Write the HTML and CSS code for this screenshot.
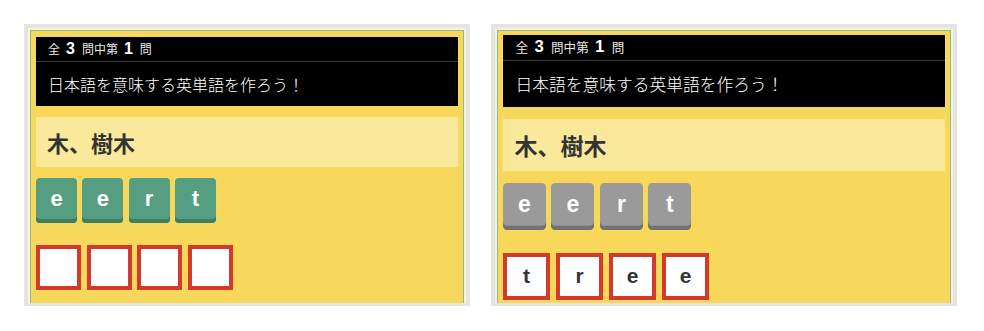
FILE: index.html
```html
<!DOCTYPE html>
<html lang="ja">
<head>
<meta charset="utf-8">
<title>英単語クイズ</title>
<link rel="stylesheet" href="styles.css">
</head>
<body>
<div class="page">
  <section class="frame frame-a">
    <div class="inner inner-a">
      <div class="content">
        <div class="qbox">
          <div class="qhead">全<b>3</b>問中第<b>1</b>問</div>
          <div class="qtext">日本語を意味する英単語を作ろう！</div>
        </div>
        <div class="word">木、樹木</div>
        <div class="tiles">
          <div class="tile">e</div>
          <div class="tile">e</div>
          <div class="tile">r</div>
          <div class="tile">t</div>
        </div>
        <div class="slots">
          <div class="slot"></div>
          <div class="slot"></div>
          <div class="slot"></div>
          <div class="slot"></div>
        </div>
      </div>
    </div>
  </section>
  <section class="frame frame-b">
    <div class="inner inner-b">
      <div class="content content-b">
        <div class="qbox">
          <div class="qhead">全<b>3</b>問中第<b>1</b>問</div>
          <div class="qtext">日本語を意味する英単語を作ろう！</div>
        </div>
        <div class="word">木、樹木</div>
        <div class="tiles">
          <div class="tile used">e</div>
          <div class="tile used">e</div>
          <div class="tile used">r</div>
          <div class="tile used">t</div>
        </div>
        <div class="slots">
          <div class="slot">t</div>
          <div class="slot">r</div>
          <div class="slot">e</div>
          <div class="slot">e</div>
        </div>
      </div>
    </div>
  </section>
</div>
</body>
</html>
```

FILE: styles.css
```css
* { box-sizing: border-box; }
html, body {
  margin: 0;
  padding: 0;
  background: #ffffff;
}
body {
  font-family: "Liberation Sans", "Noto Sans CJK JP", sans-serif;
  color: #333333;
}
.page {
  display: flex;
  gap: 21px;
  padding: 24px 0 0 24px;
}
.frame {
  height: 282px;
  border: 4px solid #e4e4e4;
  border-bottom: 3px solid #e4e4e4;
  background: #f7f2d9;
  overflow: hidden;
}
.frame-a { width: 446px; }
.frame-b { width: 466px; }
.inner {
  margin: 2px 2px 0 2px;
  border: 1px solid #8dbb8f;
  background: #f8d85a;
  padding: 6px 5px 60px 5px;
}
.inner-b { padding-top: 4px; }
.content-b { zoom: 1.047; }

.qbox {
  background: #000000;
  color: #ffffff;
}
.qhead {
  height: 25px;
  border-bottom: 1px solid #383838;
  padding-left: 12px;
  display: flex;
  align-items: center;
  font-family: "Noto Sans CJK JP", sans-serif;
  font-size: 12px;
  color: #e8e8e8;
  line-height: 1;
}
.qhead b {
  font-family: "Liberation Sans", sans-serif;
  font-weight: 700;
  font-size: 16px;
  color: #ffffff;
  margin: 0 7px 0 6px;
}
.qtext {
  height: 44px;
  line-height: 44px;
  padding-left: 12px;
  font-family: "Noto Sans CJK JP", sans-serif;
  font-size: 16px;
  font-weight: 300;
  color: #ffffff;
}
.word {
  margin-top: 11px;
  height: 50px;
  line-height: 50px;
  padding-left: 11px;
  background: #fae99b;
  font-family: "Noto Sans CJK JP", sans-serif;
  font-size: 22px;
  font-weight: 700;
  color: #333333;
}
.tiles {
  margin-top: 11px;
  display: flex;
  gap: 5.3px;
}
.tile {
  width: 41px;
  height: 45px;
  border-radius: 4px;
  background: #559e81;
  box-shadow: inset 0 -4px 0 #3e7c63;
  color: #ffffff;
  font-family: "Liberation Sans", sans-serif;
  font-weight: 700;
  font-size: 22px;
  line-height: 41px;
  text-align: center;
}
.tile.used {
  background: #9a9a9a;
  box-shadow: inset 0 -4px 0 #727272;
}
.slots {
  margin-top: 22px;
  display: flex;
  gap: 5.6px;
}
.slot {
  width: 45px;
  height: 45px;
  border: 4px solid #d33a2c;
  background: #ffffff;
  color: #333333;
  font-family: "Liberation Sans", sans-serif;
  font-weight: 700;
  font-size: 20px;
  line-height: 37px;
  text-align: center;
}
```
